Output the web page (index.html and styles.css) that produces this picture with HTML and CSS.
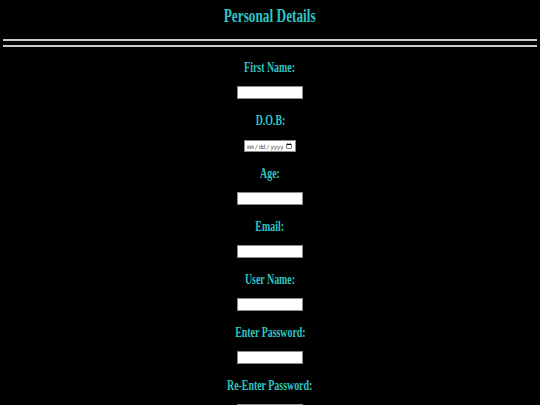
FILE: index.html
```html
<!DOCTYPE html>
<html>
<head>
<meta charset="utf-8">
<title>Personal Details</title>
<link rel="stylesheet" href="styles.css">
</head>
<body>
<h1 class="title"><span class="sq">Personal Details</span></h1>
<hr class="rule">
<hr class="rule rule2">
<form class="form">
  <div class="field"><label class="lbl"><span class="sq">First Name:</span></label><input class="box" type="text"></div>
  <div class="field"><label class="lbl"><span class="sq">D.O.B:</span></label><input class="box date" type="date"></div>
  <div class="field"><label class="lbl"><span class="sq">Age:</span></label><input class="box" type="text"></div>
  <div class="field"><label class="lbl"><span class="sq">Email:</span></label><input class="box" type="text"></div>
  <div class="field"><label class="lbl"><span class="sq">User Name:</span></label><input class="box" type="text"></div>
  <div class="field"><label class="lbl"><span class="sq">Enter Password:</span></label><input class="box" type="password"></div>
  <div class="field"><label class="lbl"><span class="sq">Re-Enter Password:</span></label><input class="box" type="password"></div>
</form>
</body>
</html>
```
FILE: styles.css
```css
html, body {
  margin: 0;
  padding: 0;
  background: #000;
  height: 100%;
  overflow: hidden;
}
body {
  font-family: "Liberation Serif", "Times New Roman", serif;
  color: #2ec4c4;
}
.sq {
  display: inline-block;
  transform: scaleX(0.66);
  transform-origin: center;
  white-space: nowrap;
}
.title {
  margin: 0;
  padding-top: 4px;
  height: 25px;
  line-height: 24px;
  font-size: 19px;
  font-weight: bold;
  text-align: center;
}
.title .sq {
  transform: scaleX(0.7);
}
.rule {
  border: 0;
  height: 2px;
  background: #c8c8c8;
  margin: 10px 3px 0 3px;
}
.rule2 {
  margin-top: 4px;
}
.form {
  display: flex;
  flex-direction: column;
  align-items: center;
  padding-top: 12px;
}
.field {
  display: flex;
  flex-direction: column;
  align-items: center;
  height: 53px;
}
.lbl {
  display: block;
  height: 16px;
  line-height: 16px;
  font-size: 15px;
  font-weight: bold;
}
.box {
  margin-top: 11px;
  width: 66px;
  height: 13px;
  box-sizing: border-box;
  border: 1px solid #8a8a8a;
  background: #fff;
  padding: 0;
  font-size: 7px;
}
.date {
  width: 52px;
  height: 12px;
  margin-top: 12px;
  padding: 0 1px;
  font-size: 6px;
  letter-spacing: -0.4px;
  font-family: "DejaVu Sans Mono", monospace;
  color: #555;
}
```
